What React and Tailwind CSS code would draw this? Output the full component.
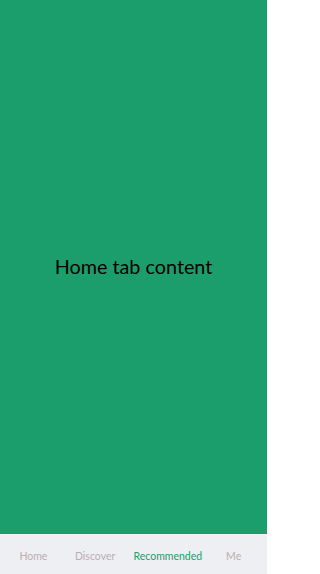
export default function App() {
  const tabs = ['Home', 'Discover', 'Recommended', 'Me']
  const active = 'Recommended'

  return (
    <div className="h-[574px] w-[267px] flex flex-col" style={{ fontFamily: 'Lato, "Noto Sans", sans-serif' }}>
      {/* Content */}
      <div className="flex-1 bg-[#1c9e6c] flex items-center justify-center">
        <p className="text-[19.8px] text-black">Home tab content</p>
      </div>

      {/* Tab bar */}
      <div className="h-[40px] bg-[#eeeff2] grid grid-cols-4 items-center pt-[5px]">
        {tabs.map((t) => (
          <div
            key={t}
            className={`text-center text-[10.5px] ${t === active ? 'text-[#17a06c]' : 'text-[#bcadb3]'} ${t === 'Discover' ? '-translate-x-[5px]' : ''}`}
          >
            {t}
          </div>
        ))}
      </div>
    </div>
  )
}
